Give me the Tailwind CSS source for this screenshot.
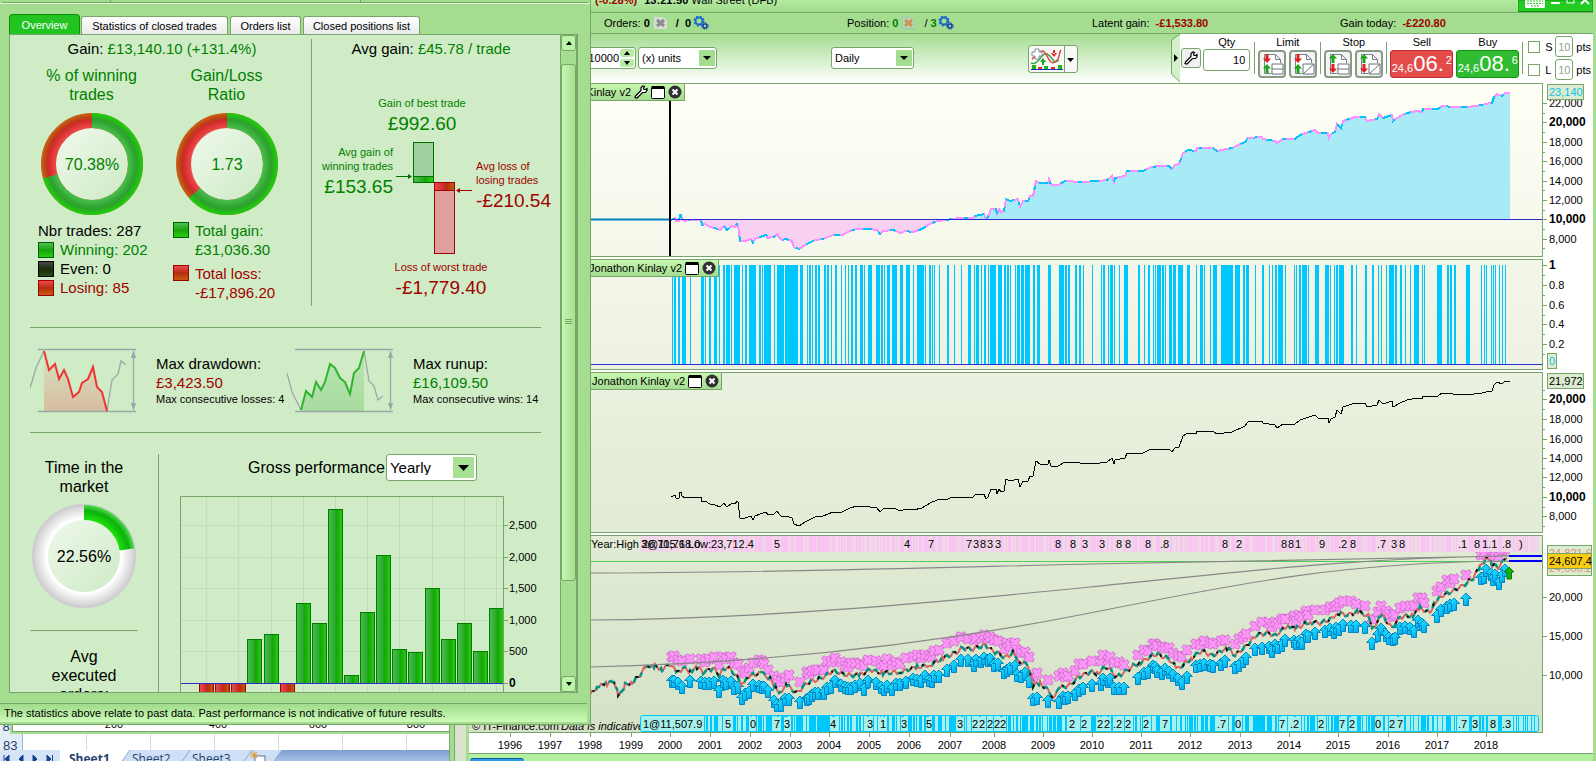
<!DOCTYPE html>
<html lang="en">
<head>
    <meta charset="UTF-8">
    <title>Trading platform - performance report</title>
    <script src="https://cdn.jsdelivr.net/npm/@tailwindcss/browser@4"></script>
</head>
<body class="relative flex h-screen overflow-hidden bg-[#dbe6cf] font-['Liberation_Sans',Arial,sans-serif] text-[11px] leading-[14px] text-black">

    <!-- shared symbols and gradients -->
    <svg class="absolute h-0 w-0" aria-hidden="true">
        <defs>
            <radialGradient id="ringGreen" gradientUnits="userSpaceOnUse" cx="51" cy="51" r="51">
                <stop offset=".7" stop-color="#4cc04c"/><stop offset=".87" stop-color="#2ca02c"/><stop offset="1" stop-color="#1fd00c"/>
            </radialGradient>
            <radialGradient id="ringRed" gradientUnits="userSpaceOnUse" cx="51" cy="51" r="51">
                <stop offset=".7" stop-color="#f04a4a"/><stop offset=".86" stop-color="#d02a2a"/><stop offset=".9" stop-color="#bc3c18"/><stop offset="1" stop-color="#c86414"/>
            </radialGradient>
            <radialGradient id="ringWhite" gradientUnits="userSpaceOnUse" cx="52" cy="52" r="52">
                <stop offset=".72" stop-color="#fff"/><stop offset="1" stop-color="#cacaca"/>
            </radialGradient>
            <radialGradient id="ringBright" gradientUnits="userSpaceOnUse" cx="52" cy="52" r="52">
                <stop offset=".7" stop-color="#1ee00c"/><stop offset=".87" stop-color="#0cb00c"/><stop offset="1" stop-color="#5ae45a"/>
            </radialGradient>
            <linearGradient id="hole" x1="0" y1="0" x2="1" y2="1"><stop offset="0" stop-color="#f0f9ec"/><stop offset="1" stop-color="#cdeac4"/></linearGradient>
            <linearGradient id="barGreen"><stop offset="0" stop-color="#4cc04c"/><stop offset=".5" stop-color="#26a826"/><stop offset=".55" stop-color="#14a408"/><stop offset="1" stop-color="#2acc14"/></linearGradient>
            <linearGradient id="barRed"><stop offset="0" stop-color="#f04c4c"/><stop offset=".5" stop-color="#c82a2a"/><stop offset=".55" stop-color="#b42c0c"/><stop offset="1" stop-color="#c85a10"/></linearGradient>
            <linearGradient id="fadeRed" x2="0" y2="1"><stop offset="0" stop-color="#d8c8a8" stop-opacity=".3"/><stop offset="1" stop-color="#d8bca0"/></linearGradient>
            <linearGradient id="fadeGreen" x2="0" y2="1"><stop offset="0" stop-color="#a0dc98" stop-opacity=".4"/><stop offset="1" stop-color="#a8dca0"/></linearGradient>
            <linearGradient id="arrowFill" x2="1" y2="1"><stop offset="0" stop-color="#30e4ff"/><stop offset=".5" stop-color="#10c8fa"/><stop offset="1" stop-color="#0090d8"/></linearGradient>
            <g id="arrow"><path d="M0 0L5.500 5.500H2.500V12.500H-2.500V5.500H-5.500Z" fill="url(#arrowFill)" stroke="#0088c4"/></g>
            <g id="clover">
                <path d="M0 -3C1 -6 5 -5 5 -3C5 -1 3 -1 3 0C3 1 5 1 5 3C5 5 1 6 0 3C-1 6 -5 5 -5 3C-5 1 -3 1 -3 0C-3 -1 -5 -1 -5 -3C-5 -5 -1 -6 0 -3Z" fill="#fc96f6" stroke="#c45cc4" stroke-dasharray="2 1"/>
            </g>
            <symbol id="wrench" viewBox="0 0 14 14"><path d="M1.500 11L7 5.500V2.500L9 1L10.500 1.500L9.500 3L10 4.500L11.500 4.500L13 3.500V5.500L11.500 7.500H8.500L3 13L1 12.500Z" fill="#fff" stroke="#000" stroke-width="1.200"/></symbol>
            <symbol id="window" viewBox="0 0 14 14"><rect x=".5" y="1.500" width="13" height="12" rx="1" fill="#fff" stroke="#000"/><path d="M1 1H13V4H1Z"/></symbol>
            <symbol id="close" viewBox="0 0 14 14"><circle cx="7" cy="7" r="6.500" fill="#303030"/><path d="M4.500 4.500L9.500 9.500M9.500 4.500L4.500 9.500" stroke="#fff" stroke-width="2"/></symbol>
            <symbol id="gears" viewBox="0 0 16 14">
                <circle cx="6" cy="5" r="3.500" fill="none" stroke="#1c6cc8" stroke-width="2"/><circle cx="6" cy="5" r="4.800" fill="none" stroke="#1c6cc8" stroke-width="1.500" stroke-dasharray="2 1.770"/>
                <circle cx="12" cy="10" r="2" fill="none" stroke="#1440a8" stroke-width="1.500"/><circle cx="12" cy="10" r="3.200" fill="none" stroke="#1440a8" stroke-dasharray="1.500 1.010"/>
            </symbol>
            <symbol id="sheet" viewBox="0 0 24 24">
                <path d="M4.500 21.500V2.500H15.500L20.500 7.500V11M15.500 2.500V7.500H20.500M4.500 21.500H11" fill="#fff" stroke="#78828c"/>
            </symbol>
            <symbol id="up" viewBox="0 0 8 9"><path d="M4 0L8 4.500H5.500V9H2.500V4.500H0Z" fill="#18a818"/></symbol>
            <symbol id="down" viewBox="0 0 8 9"><path d="M4 9L8 4.500H5.500V0H2.500V4.500H0Z" fill="#e02020"/></symbol>
            <symbol id="slant" viewBox="0 0 14 17"><path d="M0 17L12 0H14V17Z" fill="#cfe0f6"/><path d="M0 17L12 0" stroke="#8aa5cc"/></symbol>
        </defs>
    </svg>

    <!-- spreadsheet behind the report -->
    <section class="flex w-[449px] flex-none flex-col justify-end bg-white">
        <svg class="h-[10px] w-full flex-none" viewBox="0 724 449 10" preserveAspectRatio="xMinYMin slice" font-size="11" text-anchor="middle">
            <path d="M0 724H10V734H0Z" fill="#e4ecf7"/><text x="6" y="731" font-size="13" fill="#24426e">8</text>
            <path d="M12 724V731.500H449V734H10V724Z" fill="#a4dc90"/><path d="M12.500 724V731.500H449" fill="none" stroke="#78a66a"/>
            <text x="114" y="728">200</text><text x="218" y="728">400</text><text x="318" y="728">600</text><text x="416" y="728">800</text>
        </svg>
        <div class="flex h-4 flex-none overflow-hidden">
            <div class="w-[23px] border-r border-[#9eb6ce] bg-[#e4ecf7] pl-[3px] pt-[5px] text-[13px] text-[#24426e]">83</div>
            <div class="w-16 border-r border-[#d0d7e5]"></div><div class="w-16 border-r border-[#d0d7e5]"></div><div class="w-16 border-r border-[#d0d7e5]"></div>
            <div class="w-16 border-r border-[#d0d7e5]"></div><div class="w-16 border-r border-[#d0d7e5]"></div><div class="w-16 border-r border-[#d0d7e5]"></div>
        </div>
        <nav class="flex h-[11px] flex-none overflow-hidden bg-linear-to-b from-[#7d9fd0] to-[#a4c0e6] font-['Open_Sans',sans-serif] text-[12px] leading-[17px] text-[#24426e]">
            <svg class="h-[17px] w-[60px] flex-none bg-[#d4e3f7]" viewBox="0 0 60 17"><path d="M4 5V13M9 5V13L5 9ZM23 5V13L19 9ZM33 5V13L37 9ZM47 5V13L51 9ZM52.500 5V13" fill="#15428b" stroke="#15428b"/></svg>
            <a href="#" class="w-[58px] bg-white pl-[9px] font-bold">Sheet1</a>
            <svg class="h-[17px] w-[14px] flex-none bg-white"><use href="#slant"/></svg><a href="#" class="w-[46px] bg-[#cfe0f6]">Sheet2</a>
            <svg class="h-[17px] w-[14px] flex-none bg-[#cfe0f6]"><use href="#slant"/></svg><a href="#" class="w-[48px] bg-[#cfe0f6]">Sheet3</a>
            <svg class="h-[17px] w-[46px] flex-none" viewBox="0 0 46 17"><path d="M0 0H42L30 17H0Z" fill="#cfe0f6"/><path d="M0 17L12 0M30 17L42 0" stroke="#8aa5cc"/><path d="M15 6H25V16H15Z" fill="#fff" stroke="#54709c"/><path d="M14 1V9M10 5H18M11 2L17 8M17 2L11 8" stroke="#e8942c"/></svg>
        </nav>
    </section>
    <div class="w-[6px] flex-none border-x border-[#78a66a] bg-[#a4dc90]"></div>
    <div class="w-[11px] flex-none bg-[#d8e2cc]"></div>

    <!-- trading platform -->
    <main class="flex min-w-0 flex-1 flex-col border-x-3 border-[#a4dc90] bg-white">
        <header class="flex h-[13px] flex-none items-start justify-between overflow-hidden border-b border-[#78a66a] bg-linear-to-b from-[#b4eca2] to-[#a0da8c]">
            <p class="-mt-[7px] pl-[126px]"><b class="text-[#a00000]">(-0.28%)</b> <b class="ml-1">13:21:50</b> <span>Wall Street (DFB)</span></p>
            <svg class="h-[12px] w-[75px]" viewBox="0 0 75 12">
                <path d="M0 0H75V11.500H0Z" fill="#22cc22" stroke="#0c900c"/><rect x="7" y="-4" width="20" height="12" rx="1.500" fill="#fff"/>
                <path d="M9 1H25M9 3.500H25M13 6H21" stroke="#22cc22" stroke-dasharray="2 1"/><path d="M33 3H42" stroke="#fff" stroke-width="2"/><path d="M49 -3H56V3H49Z" fill="none" stroke="#fff"/><path d="M63 -4L71 4M71 -4L63 4" stroke="#fff" stroke-width="2"/>
            </svg>
        </header>
        <div class="flex h-[21px] flex-none items-center border-b border-[#78a66a] bg-[#a4dc90] pl-[135px]">
            <div class="flex w-[243px] items-center">Orders:&nbsp; <b>0</b><svg class="ml-1 h-3 w-[13px]"><path d="M0 0H9L13 3V12H0Z" fill="#d8dcd8"/><path d="M3 3L10 9M10 3L3 9" stroke="#8c8c8c" stroke-width="3"/></svg><b class="ml-[9px]">/&nbsp; 0</b><svg class="ml-[2px] h-[14px] w-4"><use href="#gears"/></svg></div>
            <div class="flex w-[245px] items-center">Position:&nbsp; <b class="text-[#008000]">0</b><svg class="ml-1 h-3 w-[13px]"><path d="M.5 .5H9L12.500 3V11.500H.5Z" fill="#b8dcb0" stroke="#98c8b0"/><path d="M3 3L10 9M10 3L3 9" stroke="#cc9458" stroke-width="3"/></svg><span class="ml-[9px]">/&nbsp;</span> <b class="text-[#008000]">3</b><svg class="ml-[1px] h-[14px] w-4"><use href="#gears"/></svg></div>
            <div class="w-[248px]">Latent gain:&nbsp; <b class="text-[#a00000]">-£1,533.80</b></div>
            <div>Gain today:&nbsp; <b class="text-[#a00000]">-£220.80</b></div>
        </div>

        <div class="flex h-[49px] flex-none items-center bg-linear-to-b from-[#a4dc90] to-white">
            <div class="relative -mt-[1px] ml-[100px] flex h-[22px] w-[67px] rounded-[3px] border border-[#78a66a] bg-white">
                <input aria-label="Amount" value="10000" class="w-[49px] text-right outline-none">
                <svg class="ml-[1px] h-5 w-[14px]" viewBox="0 0 14 20"><rect y="1" width="14" height="8" rx="2" fill="#b8eca4"/><rect y="11" width="14" height="8" rx="2" fill="#b8eca4"/><path d="M4 7H10L7 3ZM4 13H10L7 17Z"/></svg>
            </div>
            <div class="relative -mt-[1px] ml-[2px] h-[22px] w-[79px]">
                <select aria-label="Unit" class="h-full w-full appearance-none rounded-[3px] border border-[#78a66a] bg-white pl-[3px]"><option>(x) units</option></select>
                <svg class="pointer-events-none absolute right-[2px] top-[3px] h-4 w-4"><rect width="16" height="16" rx="1" fill="#a4dc90"/><path d="M4 6H12L8 10Z"/></svg>
            </div>
            <div class="relative -mt-[1px] ml-[114px] h-[22px] w-[83px]">
                <select aria-label="Timeframe" class="h-full w-full appearance-none rounded-[3px] border border-[#78a66a] bg-white pl-[3px]"><option>Daily</option></select>
                <svg class="pointer-events-none absolute right-[2px] top-[3px] h-4 w-4"><rect width="16" height="16" rx="1" fill="#a4dc90"/><path d="M4 6H12L8 10Z"/></svg>
            </div>
            <button aria-label="Add indicator" class="ml-[114px] flex h-[28px] w-[50px] rounded-[3px] border border-[#78a66a] bg-[#f8f8f8]">
                <svg class="h-[26px] w-12" viewBox="0 0 48 26">
                    <path d="M2 17C10 20 12 6 18 8S24 20 30 14" fill="none" stroke="#40a840" stroke-width="1.500"/><path d="M3 13C8 10 10 4 14 5S20 20 26 16S29 8 32 4" fill="none" stroke="#e04848" stroke-width="1.500"/>
                    <path d="M6 3H10V6H13V10H10V13H6V10H3V6H6Z" fill="#fff" stroke="#8090a0"/><path d="M14 12L17 16H11ZM13 16H15V19H13Z" fill="#18a818"/><path d="M25 11L28 7H22ZM24 4H26V8H24Z" fill="#e02020"/>
                    <path d="M3 19H7V23H3ZM15 20H19V23H15ZM29 19H33V23H29Z" fill="#18b818"/><path d="M9 21H13V23H9ZM22 21H26V23H22Z" fill="#e03030"/><path d="M2 23.500H34" stroke="#2030c0"/>
                    <path d="M35.500 0V26" stroke="#78a66a"/><path d="M38 12H45L41.500 16Z"/>
                </svg>
            </button>
            <div class="ml-auto flex h-full items-start">
                <svg class="h-[49px] w-[12px]" viewBox="0 0 12 49"><path d="M12 0L4 6V40L12 48Z" fill="#d4f0ca"/><path d="M12 0L3.500 6V40L12 48" fill="none" stroke="#78a66a"/><path d="M6 20L10 24L6 28Z"/></svg>
                <div class="flex h-full items-start bg-white">
                    <button aria-label="Settings" class="ml-[1px] mt-[14px] flex h-[20px] w-[20px] items-center justify-center rounded-[3px] border border-[#78a66a] bg-[#f0f0f0]"><svg class="h-[14px] w-[14px]"><use href="#wrench"/></svg></button>
                    <label class="ml-[2px] mr-[4px] mt-[1px] flex w-[47px] flex-col items-center">Qty<input value="10" class="h-[22px] w-full rounded-[3px] border border-[#78a66a] pr-1 text-right outline-none"></label>
                    <div class="mt-2 h-8 w-px bg-[#78a66a]"></div>
                    <div class="mt-[1px] w-[65px] text-center">Limit
                        <div class="mt-[1px] flex justify-center gap-[3px]">
                            <button aria-label="Limit order" class="h-7 w-7 rounded-[4px] border-2 border-[#8a9a84] bg-[#f4f4f4]"><svg viewBox="0 0 24 24"><use href="#sheet"/><use href="#down" x="3" y="2" width="8" height="9"/><use href="#up" x="3" y="12" width="8" height="9"/><path d="M12 12H23V22H12ZM12 17H23" fill="#fff" stroke="#68727c"/></svg></button>
                            <button aria-label="Limit on line" class="h-7 w-7 rounded-[4px] border-2 border-[#8a9a84] bg-[#f4f4f4]"><svg viewBox="0 0 24 24"><use href="#sheet"/><use href="#down" x="3" y="2" width="8" height="9"/><use href="#up" x="3" y="12" width="8" height="9"/><path d="M12 12H23V22H12ZM12 22L23 12" fill="#fff" stroke="#68727c"/></svg></button>
                        </div>
                    </div>
                    <div class="mt-2 h-8 w-px bg-[#78a66a]"></div>
                    <div class="mt-[1px] w-[65px] text-center">Stop
                        <div class="mt-[1px] flex justify-center gap-[3px]">
                            <button aria-label="Stop order" class="h-7 w-7 rounded-[4px] border-2 border-[#8a9a84] bg-[#f4f4f4]"><svg viewBox="0 0 24 24"><use href="#sheet"/><use href="#up" x="3" y="2" width="8" height="9"/><use href="#down" x="3" y="12" width="8" height="9"/><path d="M12 12H23V22H12ZM12 17H23" fill="#fff" stroke="#68727c"/></svg></button>
                            <button aria-label="Stop on line" class="h-7 w-7 rounded-[4px] border-2 border-[#8a9a84] bg-[#f4f4f4]"><svg viewBox="0 0 24 24"><use href="#sheet"/><use href="#up" x="3" y="2" width="8" height="9"/><use href="#down" x="3" y="12" width="8" height="9"/><path d="M12 12H23V22H12ZM12 22L23 12" fill="#fff" stroke="#68727c"/></svg></button>
                        </div>
                    </div>
                    <div class="mt-2 h-8 w-px bg-[#78a66a]"></div>
                    <div class="ml-[3px] mt-[1px] text-center">Sell
                        <button class="mt-[1px] flex h-7 w-[63px] items-center justify-center rounded-[3px] border border-[#c03030] bg-[#e44c4c] text-white"><span class="pt-[8px]">24,6</span><span class="text-[22px]">06.</span><span class="pb-[8px] pl-[2px]">2</span></button>
                    </div>
                    <div class="ml-[3px] mt-[1px] text-center">Buy
                        <button class="mt-[1px] flex h-7 w-[63px] items-center justify-center rounded-[3px] border border-[#189018] bg-[#30bc30] text-white"><span class="pt-[8px]">24,6</span><span class="text-[22px]">08.</span><span class="pb-[8px] pl-[2px]">6</span></button>
                    </div>
                    <div class="ml-[3px] mt-2 h-8 w-px bg-[#78a66a]"></div>
                    <div class="ml-[5px] mr-[2px] mt-[2px] flex flex-col gap-[2px]">
                        <div class="flex items-center"><label class="flex w-[27px] items-center gap-[5px]"><input type="checkbox" class="h-3 w-3 appearance-none border border-[#78a66a] bg-white">S</label><input aria-label="Stop points" value="10" class="mr-[3px] h-[21px] w-[18px] rounded-[3px] border border-[#78a66a] text-center text-[#90a488] outline-none"><span>pts</span></div>
                        <div class="flex items-center"><label class="flex w-[27px] items-center gap-[5px]"><input type="checkbox" class="h-3 w-3 appearance-none border border-[#78a66a] bg-white">L</label><input aria-label="Limit points" value="10" class="mr-[3px] h-[21px] w-[18px] rounded-[3px] border border-[#78a66a] text-center text-[#90a488] outline-none"><span>pts</span></div>
                    </div>
                </div>
            </div>
        </div>

        <div class="flex flex-none">
            <div class="flex min-w-0 flex-1 flex-col gap-[2px]">
                <section class="relative border-y border-r border-[#78a66a] bg-linear-to-b from-[#fffff6] to-[#f4f7ea]">
                    <svg id="equityArea" class="block h-[172px] w-full" viewBox="469 84 1073 172" preserveAspectRatio="none"></svg>
                    <div class="absolute left-0 top-0 flex h-[17px] w-[216px] items-center justify-end gap-[3px] border-b border-r border-[#78a66a] bg-linear-to-b from-[#c8f8b0] to-[#a4dc90] pr-[2px]">
                        Jonathon Kinlay v2 <svg class="h-[14px] w-[14px]"><use href="#wrench"/></svg><svg class="h-[14px] w-[14px]"><use href="#window"/></svg><svg class="h-[14px] w-[14px]"><use href="#close"/></svg>
                    </div>
                </section>
                <section class="relative border-y border-r border-[#78a66a] bg-linear-to-b from-[#f3f7e9] to-[#ecf1e1]">
                    <svg id="tradeBars" class="block h-[109px] w-full" viewBox="469 260 1073 109" preserveAspectRatio="none"></svg>
                    <div class="absolute left-0 top-0 flex h-[17px] w-[250px] items-center justify-end gap-[3px] border-b border-r border-[#78a66a] bg-linear-to-b from-[#c8f8b0] to-[#a4dc90] pr-[2px]">
                        Jonathon Kinlay v2 <svg class="h-[14px] w-[14px]"><use href="#window"/></svg><svg class="h-[14px] w-[14px]"><use href="#close"/></svg>
                    </div>
                </section>
                <section class="relative border-y border-r border-[#78a66a] bg-linear-to-b from-[#ebf1e0] to-[#e1ebd5]">
                    <svg id="equityLine" class="block h-[159px] w-full" viewBox="469 373 1073 159" preserveAspectRatio="none"></svg>
                    <div class="absolute left-0 top-0 flex h-[17px] w-[253px] items-center justify-end gap-[3px] border-b border-r border-[#78a66a] bg-linear-to-b from-[#c8f8b0] to-[#a4dc90] pr-[2px]">
                        Jonathon Kinlay v2 <svg class="h-[14px] w-[14px]"><use href="#window"/></svg><svg class="h-[14px] w-[14px]"><use href="#close"/></svg>
                    </div>
                </section>
                <section class="border-y border-r border-[#78a66a] bg-linear-to-b from-[#e1ebd5] to-[#d5e2c7]">
                    <svg id="priceChart" class="block h-[196px] w-full text-[11px]" viewBox="469 536 1073 196" preserveAspectRatio="none"></svg>
                </section>
            </div>
            <svg id="valueAxis" class="h-[650px] w-[50px] flex-none text-[11px]" viewBox="1543 83 50 650"></svg>
        </div>
        <svg id="yearAxis" class="h-[20px] w-full flex-none text-[11px]" viewBox="469 733 1124 20" preserveAspectRatio="none" text-anchor="middle"></svg>
        <footer class="flex flex-1 items-end border-t border-[#78a66a] bg-[#b4f0a0] pl-[1px]"><div class="h-[3px] w-[54px] rounded-t border-t border-[#1858a0] bg-[#2c9ce8]"></div></footer>
    </main>

    <!-- performance report window -->
    <aside class="absolute left-0 top-0 flex h-[725px] w-[591px] flex-col border-b border-r border-[#78a66a] bg-[#a4dc90]">
        <div class="mx-[2px] flex h-[3px] flex-none border-b border-[#78a66a]"><div class="w-[109px] border-r border-[#78a66a]"></div><div class="w-[250px] border-r border-[#78a66a]"></div></div>
        <nav class="flex h-[31px] flex-none items-end gap-[2px] border-t border-[#e0fcd4] pl-[9px]">
            <button class="h-5 w-[71px] rounded-t-[4px] border border-b-0 border-[#0c900c] bg-[#22c422] text-white">Overview</button>
            <button class="-ml-[1px] h-[18px] w-[147px] rounded-t-[3px] border border-b-0 border-[#78a66a] bg-linear-to-b from-white to-[#eaeaea]">Statistics of closed trades</button>
            <button class="h-[18px] w-[71px] rounded-t-[3px] border border-b-0 border-[#78a66a] bg-linear-to-b from-white to-[#eaeaea]">Orders list</button>
            <button class="h-[18px] w-[117px] rounded-t-[3px] border border-b-0 border-[#78a66a] bg-linear-to-b from-white to-[#eaeaea]">Closed positions list</button>
        </nav>
        <div class="ml-[9px] mr-[12px] flex h-[659px] flex-none border border-r-2 border-[#78a66a] bg-[#d0ecc6]">
            <div class="min-w-0 flex-1 overflow-hidden">
                <div class="flex h-[292px] pt-1">
                    <div class="h-[267px] w-[302px] border-r border-[#78a66a] pl-[14px] pr-[17px] text-[15px] leading-[19px]">
                        <p class="pl-[6px] text-center leading-5">Gain: <span class="text-[#008000]">£13,140.10 (+131.4%)</span></p>
                        <div class="mt-[7px] grid grid-cols-2">
                            <h3 class="text-center text-[16px] text-[#008000]">% of winning<br>trades</h3>
                            <h3 class="text-center text-[16px] text-[#008000]">Gain/Loss<br>Ratio</h3>
                            <svg class="mx-auto mt-[9px] h-[102px] w-[102px]" viewBox="0 0 102 102" fill="none">
                                <circle cx="51" cy="51" r="36" fill="url(#hole)"/>
                                <circle cx="51" cy="51" r="43.500" stroke="url(#ringRed)" stroke-width="15"/>
                                <circle cx="51" cy="51" r="43.500" stroke="url(#ringGreen)" stroke-width="15" pathLength="100" stroke-dasharray="70.380 100" transform="rotate(-90 51 51)"/>
                                <text x="51" y="57" fill="#008000" font-size="16" text-anchor="middle">70.38%</text>
                            </svg>
                            <svg class="mx-auto mt-[9px] h-[102px] w-[102px]" viewBox="0 0 102 102" fill="none">
                                <circle cx="51" cy="51" r="36" fill="url(#hole)"/>
                                <circle cx="51" cy="51" r="43.500" stroke="url(#ringRed)" stroke-width="15"/>
                                <circle cx="51" cy="51" r="43.500" stroke="url(#ringGreen)" stroke-width="15" pathLength="100" stroke-dasharray="63.400 100" transform="rotate(-90 51 51)"/>
                                <text x="51" y="57" fill="#008000" font-size="16" text-anchor="middle">1.73</text>
                            </svg>
                            <div class="mt-[6px] pl-[14px]">
                                <p>Nbr trades: 287</p>
                                <p class="flex items-center gap-[6px] text-[#008000]"><i class="h-4 w-4 border border-[#006000] bg-linear-to-b from-[#4cc04c] via-[#14a408] to-[#2acc14]"></i>Winning: 202</p>
                                <p class="flex items-center gap-[6px]"><i class="h-4 w-4 border border-black bg-linear-to-b from-[#484848] via-[#182c08] to-[#284c10]"></i>Even: 0</p>
                                <p class="flex items-center gap-[6px] text-[#a00000]"><i class="h-4 w-4 border border-[#a00000] bg-linear-to-b from-[#f04c4c] via-[#b42c0c] to-[#c85a10]"></i>Losing: 85</p>
                            </div>
                            <div class="mt-[6px] flex flex-col gap-[5px] pl-[14px]">
                                <p class="flex gap-[6px] text-[#008000]"><i class="mt-[1px] h-4 w-4 border border-[#006000] bg-linear-to-b from-[#4cc04c] via-[#14a408] to-[#2acc14]"></i><span>Total gain:<br>£31,036.30</span></p>
                                <p class="flex gap-[6px] text-[#a00000]"><i class="mt-[1px] h-4 w-4 border border-[#a00000] bg-linear-to-b from-[#f04c4c] via-[#b42c0c] to-[#c85a10]"></i><span>Total loss:<br>-£17,896.20</span></p>
                            </div>
                        </div>
                    </div>
                    <div class="flex-1">
                        <p class="pr-[10px] text-center text-[15px] leading-5">Avg gain: <span class="text-[#008000]">£45.78 / trade</span></p>
                        <div class="mt-[37px] pr-[28px] text-center text-[#008000]">Gain of best trade<p class="mt-[2px] text-[19px] leading-6">£992.60</p></div>
                        <div class="mt-[6px] flex h-[113px]">
                            <div class="w-[81px] pt-[3px] text-right text-[#008000]">Avg gain of<br>winning trades<p class="mt-[2px] text-[19px] leading-6">£153.65</p></div>
                            <svg class="mx-[3px] h-[113px] w-[76px] flex-none" viewBox="396 142 76 113">
                                <rect x="413.500" y="142.500" width="20" height="40" fill="#a0d0a0" stroke="#007000"/><rect x="413.500" y="176.500" width="20" height="6" fill="url(#barGreen)" stroke="#007000"/>
                                <rect x="434.500" y="182.500" width="20" height="71" fill="#e0a0a0" stroke="#a00000"/><rect x="434.500" y="182.500" width="20" height="8" fill="url(#barRed)" stroke="#a00000"/>
                                <path d="M396 176.500H409" stroke="#007000"/><path d="M408 174V179L412 176.500Z" fill="#007000"/><path d="M459 190.500H472" stroke="#a00000"/><path d="M460 188V193L456 190.500Z" fill="#a00000"/>
                            </svg>
                            <div class="pl-[1px] pt-[17px] text-[#a00000]">Avg loss of<br>losing trades<p class="mt-[2px] text-[19px] leading-6">-£210.54</p></div>
                        </div>
                        <div class="mt-[5px] pl-[10px] text-center text-[#a00000]">Loss of worst trade<p class="mt-[2px] text-[19px] leading-6">-£1,779.40</p></div>
                    </div>
                </div>

                <div class="ml-5 mr-[19px] flex h-[105px] border-t border-[#78a66a]">
                    <svg class="mt-[20px] h-[66px] w-[108px] flex-none" viewBox="30 348 108 66" fill="none">
                        <path d="M44 351L49 370L55 364L59 379L64 370L68 379L73 397L79 392L82 383L88 379L93 367L97 387L102 392L107 411H44Z" fill="url(#fadeRed)"/>
                        <path d="M38 349.500H136M38 411.500H136M133.500 354V407M30 388L36 368L44 351M107 411L112 380L118 374L121 361L126 365" stroke="#98a8a8" stroke-width="1.300"/>
                        <path d="M133.500 350L136 358H131ZM133.500 411L136 403H131Z" fill="#98a8a8"/>
                        <path d="M44 351L49 370L55 364L59 379L64 370L68 379L73 397L79 392L82 383L88 379L93 367L97 387L102 392L107 411" stroke="#f03434" stroke-width="2"/>
                    </svg>
                    <div class="ml-[18px] w-[131px] pt-[26px]"><p class="text-[15px] leading-[19px]">Max drawdown:<br><span class="text-[#a00000]">£3,423.50</span></p><p class="whitespace-nowrap">Max consecutive losses: 4</p></div>
                    <svg class="mt-[20px] h-[66px] w-[108px] flex-none" viewBox="287 348 108 66" fill="none">
                        <path d="M301 411L306 391L312 397L316 382L321 390L325 382L330 364L335 368L340 378L345 382L350 394L354 373L359 368L364 351V411Z" fill="url(#fadeGreen)"/>
                        <path d="M295 349.500H393M295 411.500H393M390.500 354V407M287 373L292 392L301 410M364 351L369 381L374 386L378 400L383 396" stroke="#98a8a8" stroke-width="1.300"/>
                        <path d="M390.500 350L393 358H388ZM390.500 411L393 403H388Z" fill="#98a8a8"/>
                        <path d="M301 410L306 391L312 397L316 382L321 390L325 382L330 364L335 368L340 378L345 382L350 394L354 373L359 368L364 351" stroke="#30b430" stroke-width="2"/>
                    </svg>
                    <div class="ml-[18px] pt-[26px]"><p class="text-[15px] leading-[19px]">Max runup:<br><span class="text-[#008000]">£16,109.50</span></p><p class="whitespace-nowrap">Max consecutive wins: 14</p></div>
                </div>

                <div class="ml-5 mr-[19px] border-t border-[#78a66a]"></div>
                <div class="flex pl-5">
                    <div class="w-[108px] flex-none pt-[25px] text-center text-[16px] leading-[19px]">
                        Time in the<br>market
                        <svg class="mx-auto mt-2 h-[104px] w-[104px]" viewBox="0 0 104 104" fill="none">
                            <circle cx="52" cy="52" r="37" fill="url(#hole)"/><circle cx="52" cy="52" r="44" stroke="url(#ringWhite)" stroke-width="16"/>
                            <circle cx="52" cy="52" r="43.500" stroke="url(#ringBright)" stroke-width="15" pathLength="100" stroke-dasharray="22.560 100" transform="rotate(-90 52 52)"/>
                            <text x="52" y="58" fill="#000" font-size="16" text-anchor="middle">22.56%</text>
                        </svg>
                        <div class="mt-[22px] border-t border-[#78a66a] pt-[16px]">Avg<br>executed<br>orders:</div>
                    </div>
                    <div class="ml-5 mt-[21px] h-[240px] min-w-0 flex-1 border-l border-[#78a66a]">
                        <div class="flex items-center pl-[89px]">
                            <label for="period" class="text-[16px]">Gross performance</label>
                            <div class="relative ml-[1px] h-[27px] w-[91px]">
                                <select id="period" class="h-full w-full appearance-none rounded-[3px] border border-[#78a66a] bg-white pl-[3px] text-[15px]"><option>Yearly</option></select>
                                <svg class="pointer-events-none absolute right-[3px] top-[3px] h-[21px] w-[21px]"><rect width="21" height="21" fill="#a8e094"/><path d="M5 8H16L10.500 14Z"/></svg>
                            </div>
                        </div>
                        <svg id="grossChart" class="ml-[21px] mt-[15px] h-[196px] w-[370px] text-[11px]" viewBox="180 496 370 196"></svg>
                    </div>
                </div>
            </div>
            <div class="flex w-[16px] flex-none flex-col border-l border-[#78a66a] bg-[#a4dc90]">
                <button aria-label="Scroll up" class="flex h-4 items-center justify-center rounded-[3px] border border-[#78a66a] bg-[#bcf4a8]"><svg class="h-1 w-2"><path d="M1 4H7L4 0Z"/></svg></button>
                <div class="mt-[13px] flex h-[517px] items-center justify-center rounded-[3px] border border-[#78a66a] bg-linear-to-r from-[#c4f8b0] to-[#a4e090]"><svg class="h-[7px] w-[7px]"><path d="M0 .5H7M0 2.500H7M0 4.500H7" stroke="#78a66a"/></svg></div>
                <button aria-label="Scroll down" class="mt-auto flex h-4 items-center justify-center rounded-[3px] border border-[#78a66a] bg-[#bcf4a8]"><svg class="h-1 w-2"><path d="M1 0H7L4 4Z"/></svg></button>
            </div>
        </div>
        <p class="mr-[3px] mt-[10px] h-[19px] flex-none border-t border-[#78a66a] bg-linear-to-b from-[#a0da8c] to-[#ccfcb8] pl-1 pt-[2px]">The statistics above relate to past data. Past performance is not indicative of future results.</p>
    </aside>

    <script>
        const el = id => document.getElementById(id);
        const toPath = pts => 'M' + pts.map(p => p[0] + ' ' + p[1]).join('L');
        const pairs = s => s.trim().split(/\s+/).map(p => p.split(',').map(Number));

        // account value after costs
        const equity = pairs(`671,497 675,495 676,498 679,498 680,492 681,492 682,496 685,498 689,497 701,497 702,502 705,501 710,504 715,505 720,507 724,503
            727,507 732,503 735,504 737,501 738,502 740,518 745,518 751,516 753,520 755,516 760,514 766,512 768,515 772,514 774,514 777,511 779,514 782,517
            786,516 792,518 794,524 799,526 805,522 815,517 823,516 833,512 842,512 850,508 857,506 870,507 877,508 880,512 883,509 893,508 901,511 905,509
            913,510 922,508 930,503 937,500 948,499 950,498 963,497 973,497 975,495 984,494 986,499 988,497 991,489 996,489 997,494 999,489 1001,492 1004,491
            1006,479 1010,481 1018,479 1020,487 1023,481 1028,481 1030,476 1033,476 1036,461 1040,464 1048,464 1049,460 1051,466 1058,466 1065,462 1080,463
            1100,463 1107,462 1112,458 1114,464 1115,460 1125,458 1127,453 1143,453 1151,449 1160,449 1169,449 1172,452 1175,448 1179,447 1183,436 1188,433
            1196,434 1197,431 1213,431 1217,434 1232,432 1245,426 1248,422 1262,421 1263,423 1275,425 1277,428 1283,424 1295,424 1300,420 1315,415 1318,418
            1328,418 1329,423 1331,419 1335,417 1337,410 1341,414 1343,407 1355,403 1365,403 1367,407 1377,405 1379,400 1383,404 1392,401 1393,407 1400,403
            1407,400 1417,398 1422,399 1423,396 1438,396 1442,393 1453,394 1467,395 1482,393 1490,391 1492,391 1494,385 1497,382 1502,384 1505,381 1510,381`);
        el('equityLine').innerHTML = `<path d="${toPath(equity)}" fill="none" stroke="#000" shape-rendering="crispEdges"/>`;

        // same curve before costs, filled around the 10,000 base
        const gross = equity.map(([x, y]) => [x, Math.round(y - 277.5 - Math.max(0, x - 860) * 0.0168)]);
        const area = toPath(gross) + 'L1510 219H671Z';
        el('equityArea').innerHTML = `
            <clipPath id="above"><rect x="590" y="84" width="950" height="135"/></clipPath><clipPath id="below"><rect x="590" y="220" width="950" height="40"/></clipPath>
            <path d="${area}" fill="#a8eaf6" clip-path="url(#above)"/><path d="${area}" fill="#f8d0f0" clip-path="url(#below)"/>
            <path d="${toPath(gross)}" fill="none" stroke="#fc90fc" stroke-width="2" shape-rendering="crispEdges"/>
            <path d="${toPath(gross)}" fill="none" stroke="#00c4fc" stroke-width="2" stroke-dasharray="4 8 9 7 3 11 6 12" shape-rendering="crispEdges"/>
            <path d="M469 219.500H1542" stroke="#2c2ccc"/><path d="M469 219.500H671" stroke="#0080c0" stroke-width="2"/><path d="M670 84V256" stroke="#000" stroke-width="2"/>`;

        // in-market periods: start, width
        const trades = pairs(`672,1 674,2 678,2 682,4 690,1 701,3 705,1 709,2 714,3 719,1 723,2 726,4 731,1 734,6 742,1 745,2 749,7 759,2 762,1 764,7 774,1 777,7 785,13
            800,3 807,1 809,2 812,1 815,2 818,2 824,2 827,2 831,1 835,2 841,1 845,1 848,1 851,2 855,2 860,3 864,1 868,4 876,4 881,2 884,1 887,3 892,5 900,3 906,4 913,1
            917,7 925,1 929,2 932,1 934,1 939,1 947,2 954,1 961,1 968,3 974,1 976,3 981,1 984,2 988,1 990,6 998,4 1004,2 1007,2 1010,1 1015,1 1017,3 1021,3 1025,5
            1033,2 1037,3 1048,3 1059,5 1065,2 1068,2 1075,2 1079,2 1083,1 1092,1 1101,1 1103,2 1108,1 1110,3 1114,1 1119,1 1124,4 1138,2 1144,1 1148,2 1153,1 1155,1
            1157,4 1162,2 1165,1 1169,3 1173,3 1178,5 1187,3 1196,1 1200,3 1204,1 1210,1 1213,4 1221,12 1235,5 1243,2 1246,3 1255,1 1262,2 1269,1 1272,1 1275,2 1278,5
            1285,1 1294,1 1296,1 1299,2 1302,5 1308,1 1315,4 1325,4 1330,1 1334,1 1336,2 1339,5 1351,2 1356,1 1365,2 1372,2 1378,1 1381,1 1386,1 1389,5 1395,2 1400,2
            1405,1 1410,1 1414,5 1422,1 1424,1 1437,5 1447,2 1450,2 1454,2 1466,4 1481,1 1484,1 1486,1 1491,1 1493,1 1495,1 1499,1 1502,1 1505,1`);
        el('tradeBars').innerHTML = trades.map(([x, w]) => `<rect x="${x}" y="265" width="${w}" height="99" fill="#00c8ff"/>`).join('') +
            '<path d="M469 364.500H1542" stroke="#2c2ccc"/>';

        // index price
        const price = pairs(`580,694 590,695 597,687 602,683 607,684 612,682 615,685 618,694 622,693 625,685 632,682 638,678 642,672 645,667 650,668 655,666 662,669 670,664
            677,673 683,668 690,671 697,667 703,672 713,668 719,675 727,667 733,672 742,684 747,677 753,675 762,673 770,679 775,687 780,692 787,685 797,693 807,683
            817,680 827,675 833,671 847,675 860,675 870,670 883,673 900,672 917,667 930,665 943,658 955,653 963,648 973,649 985,645 993,651 1005,657 1013,653
            1020,662 1028,665 1033,685 1040,683 1048,690 1053,697 1060,688 1070,685 1078,677 1090,672 1097,673 1107,667 1117,677 1125,672 1133,666 1140,663
            1150,657 1158,654 1170,660 1177,669 1183,665 1192,658 1202,651 1212,656 1227,648 1235,655 1245,647 1257,635 1267,633 1275,636 1288,625 1295,629
            1310,622 1320,623 1330,620 1337,613 1347,615 1358,612 1368,616 1373,628 1382,615 1392,628 1400,617 1413,615 1420,608 1430,613 1435,602 1443,595
            1453,591 1467,583 1473,578 1480,567 1487,556 1492,565 1498,567 1505,560 1509,559`);
        // jitter for the daily bars
        const daily = [];
        for (let i = 0; i < price.length - 1; i++) {
            const [x1, y1] = price[i], [x2, y2] = price[i + 1];
            for (let x = x1; x < x2; x += 2) {
                daily.push([x, Math.round(y1 + (y2 - y1) * (x - x1) / (x2 - x1) + Math.sin(x * 2.3) * 2)]);
            }
        }
        const priceAt = x => daily.reduce((a, b) => Math.abs(b[0] - x) < Math.abs(a[0] - x) ? b : a)[1];
        const marks = trades.flatMap(([x, w]) => w > 4 ? [x, x + 4] : [x]);
        const line = toPath(daily);

        const stripes = trades.map(([x, w]) => [x + 32, w]).filter(s => s[0] > 698 && s[0] < 1537);
        const topText = [['5', 774], ['4', 904], ['7', 928], ['7', 966], ['3', 973], ['8', 980], ['3', 987], ['3', 995], ['8', 1055], ['8', 1070], ['3', 1082], ['3', 1099], ['8', 1116], ['8', 1125], ['8', 1145],
            ['.8', 1160], ['8', 1222], ['2', 1236], ['8', 1281], ['8', 1288], ['1', 1295], ['9', 1319], ['.2', 1338], ['8', 1350], ['.7', 1377], ['3', 1391], ['8', 1399], ['.1', 1458], ['8', 1474], ['1.1', 1482], ['.8', 1502], [')', 1519]];
        const bottomText = [['5', 725], ['0', 750], ['7', 774], ['3', 784], ['4', 830], ['3', 867], ['1', 880], ['3', 901], ['5', 926], ['3', 957], ['2', 972], ['2', 979], ['2', 987], ['2', 994], ['2', 1000], ['2', 1069], ['2', 1081], ['2', 1097],
            ['2', 1104], ['.2', 1113], ['2', 1125], ['2', 1143], ['7', 1162], ['.7', 1217], ['0', 1235], ['7', 1279], ['.2', 1290], ['2', 1318], ['7', 1339], ['2', 1349], ['0', 1375], ['2', 1389], ['7', 1397], ['.7', 1458], ['3', 1472], ['8', 1490], ['.3', 1502]];

        el('priceChart').innerHTML = `
            <path d="M469 561.500H1542" stroke="#50d050"/>
            ${marks.map(x => `<use href="#clover" x="${x}" y="${priceAt(x) - 9 - x * 5 % 4}"/>`).join('')}
            ${marks.map(x => `<use href="#arrow" x="${x}" y="${priceAt(x) + 5 + x * 7 % 5}"/>`).join('')}
            <path d="${line}" fill="none" stroke="#d86464" stroke-width="2"/>
            <path d="${line}" fill="none" stroke="#009488" stroke-width="2.500" stroke-dasharray="6 5 4 9"/>
            <path d="${line}" fill="none" stroke="#101010" stroke-width="2" stroke-dasharray="3 17 2 12"/>
            <path d="M590 573C760 573 920 568 1090 564S1400 557 1509 556M590 620C760 619 930 603 1090 587S1350 558 1509 556M590 667C760 663 930 645 1090 613S1350 562 1509 561" fill="none" stroke="#888" stroke-width="1.200"/>
            <path d="M1509 567L1514 572H1511.500V579H1507V572H1504Z" fill="#10b010" stroke="#088008"/>
            <path d="M1509 556H1542M1509 561H1542" stroke="#0000f8" stroke-width="2"/>
            <rect x="640" y="536" width="899" height="16" rx="2" fill="#f0d8e8"/>
            ${stripes.map(([x, w]) => `<rect x="${x}" y="536" width="${w}" height="16" fill="#f9c4f2"/>`).join('')}
            <text x="591" y="548">Year:High 26,705.6 Low:23,712.4</text><text x="641" y="548">3@11,718.0</text>
            ${topText.map(([t, x]) => `<text x="${x}" y="548">${t}</text>`).join('')}
            <text x="472" y="730">© IT-Finance.com</text><text x="561" y="730" font-style="italic">Data is indicative</text>
            <rect x="640.500" y="715.500" width="898" height="16" rx="2" fill="#a8f0ec" stroke="#00c8ff"/>
            ${stripes.map(([x, w]) => `<rect x="${x}" y="716" width="${w}" height="16" fill="#00c8ff"/>`).join('')}
            <text x="643" y="728">1@11,507.9</text>
            ${bottomText.map(([t, x]) => `<rect x="${x}" y="717" width="${t.length * 4 + 2}" height="14" fill="#a8f0ec"/><text x="${x}" y="728">${t}</text>`).join('')}`;

        // right hand scales: label, y, bold
        const scale = [['22,000', 103], ['20,000', 122, 1], ['18,000', 142], ['16,000', 161], ['14,000', 181], ['12,000', 200], ['10,000', 219, 1], ['8,000', 239],
            ['1', 265, 1], ['0.8', 285], ['0.6', 305], ['0.4', 324], ['0.2', 344],
            ['20,000', 399, 1], ['18,000', 419], ['16,000', 439], ['14,000', 458], ['12,000', 477], ['10,000', 497, 1], ['8,000', 516],
            ['20,000', 597], ['15,000', 636], ['10,000', 675]];
        const minor = [113, 132, 152, 171, 190, 210, 229, 248, 275, 295, 315, 334, 354, 390, 409, 429, 448, 468, 487, 507, 526];
        const tag = (y, text, w, fill, color) => `<rect x="1547.500" y="${y - 7.5}" width="${w}" height="15" fill="${fill}" stroke="#78a66a"/><text x="1549" y="${y + 4}" fill="${color}">${text}</text>`;
        el('valueAxis').innerHTML = scale.map(([t, y, b]) => `<path d="M1543 ${y + .5}H1547" stroke="#78a66a"/><text x="1549" y="${y + 4}" ${b ? 'font-weight="bold" font-size="12"' : ''}>${t}</text>`).join('') +
            minor.map(y => `<path d="M1543 ${y + .5}H1545" stroke="#78a66a"/>`).join('') +
            tag(92, '23,140', 36, '#dcecd0', '#10c0e8') + tag(361, '0', 9, '#dcecd0', '#10c0e8') + tag(381, '21,972', 36, '#dcecd0', '#000') +
            tag(553, '24,821.6', 44, '#dcecd0', '#e09080') + tag(568, '24,606.2', 44, '#dcecd0', '#e09080') + tag(561, '24,607.4', 44, '#f8cc10', '#000');

        const years = [510, 550, 590, 631, 670, 710, 750, 790, 829, 869, 909, 950, 994, 1043, 1092, 1141, 1190, 1240, 1289, 1338, 1388, 1437, 1486];
        el('yearAxis').innerHTML = years.map((x, i) => `<path d="M${x + .5} 733V737" stroke="#78a66a"/><text x="${x}" y="749">${1996 + i}</text>`).join('');

        // yearly result: x, top
        const gains = pairs('247,639 264,634 296,603 312,623 328,509 344,675 360,612 376,555 392,649 408,652 425,588 441,639 457,623 473,651 489,608');
        el('grossChart').innerHTML =
            [206, 238, 271, 303, 335, 367, 399, 432, 464, 496].map(x => `<path d="M${x + .5} 497V692" stroke="#c0dcb8"/>`).join('') +
            [['2,500', 525], ['2,000', 557], ['1,500', 588], ['1,000', 620], ['500', 651]].map(([t, y]) => `<path d="M181 ${y + .5}H503" stroke="#c0dcb8"/><path d="M503 ${y + .5}H508" stroke="#78a66a"/><text x="509" y="${y + 4}">${t}</text>`).join('') +
            gains.map(([x, y]) => `<rect x="${x + .5}" y="${y + .5}" width="14" height="${683 - y}" fill="url(#barGreen)" stroke="#007c00"/>`).join('') +
            [199, 215, 231, 280].map(x => `<rect x="${x + .5}" y="683.500" width="14" height="12" fill="url(#barRed)" stroke="#a00000"/>`).join('') +
            `<path d="M180.500 692V496.500H503.500V692M503 683.500H508" fill="none" stroke="#78a66a"/><path d="M181 683.500H503" stroke="#2c2ccc"/><text x="509" y="687" font-weight="bold" font-size="12">0</text>`;
    </script>
</body>
</html>
